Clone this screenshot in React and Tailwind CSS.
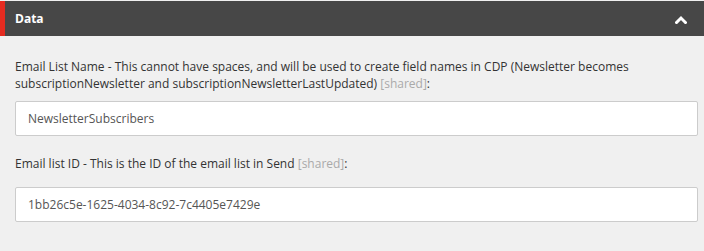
import React from 'react';

const fields = [
  {
    label:
      'Email List Name - This cannot have spaces, and will be used to create field names in CDP (Newsletter becomes subscriptionNewsletter and subscriptionNewsletterLastUpdated)',
    value: 'NewsletterSubscribers',
  },
  {
    label: 'Email list ID - This is the ID of the email list in Send',
    value: '1bb26c5e-1625-4034-8c92-7c4405e7429e',
  },
];

const App = () => {
  return (
    <div
      className="w-[704px] h-[251px] bg-[#f0f0f0] pt-px overflow-hidden"
      style={{ fontFamily: '"Open Sans", sans-serif' }}
    >
      {/* Section header */}
      <div className="h-[35px] bg-[#474747] border-l-[5px] border-[#e42b20] flex items-center justify-between pl-[10px] pr-[17px]">
        <span className="text-white text-[12px] font-bold">Data</span>
        <svg width="12" height="9" viewBox="0 0 12 9" className="mt-px">
          <polyline
            points="1.5,7.5 6,3 10.5,7.5"
            fill="none"
            stroke="white"
            strokeWidth="3"
            strokeLinecap="square"
          />
        </svg>
      </div>

      {/* Fields */}
      <div className="pl-[15px] pr-[6px] pt-[22px]">
        {fields.map((f, i) => (
          <div key={i} className={i === 0 ? 'mb-[19px]' : ''}>
            <div className="text-[12px] leading-[17px] text-[#333] pr-[20px]">
              {f.label} <span className="text-[#aaa]">[shared]</span>:
            </div>
            <div
              className={`${i === 0 ? 'mt-[9px]' : 'mt-[15px]'} h-[35px] bg-white border border-[#ccc] rounded-[2px] flex items-center px-[12px] text-[12px] text-[#555]`}
            >
              {f.value}
            </div>
          </div>
        ))}
      </div>
    </div>
  );
};

export default App;
